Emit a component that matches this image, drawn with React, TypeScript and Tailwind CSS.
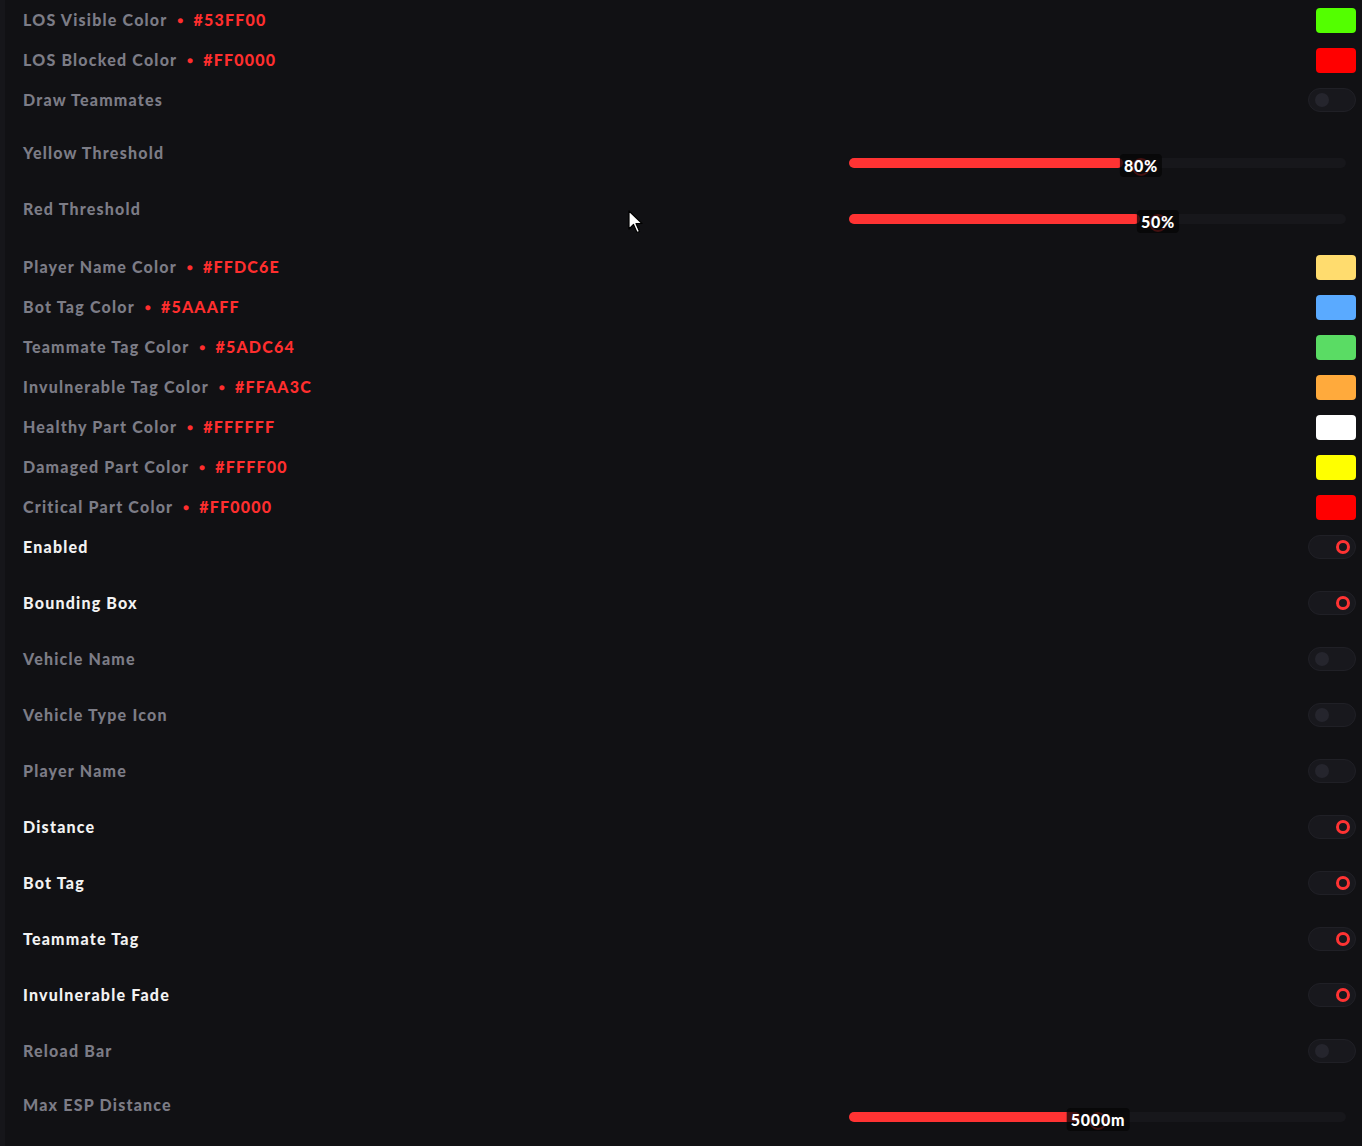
import React from 'react';

type ColorRow = { label: string; hex: string };
type ToggleRow = { label: string; on: boolean };

const topColors: ColorRow[] = [
  { label: 'LOS Visible Color', hex: '#53FF00' },
  { label: 'LOS Blocked Color', hex: '#FF0000' },
];

const tagColors: ColorRow[] = [
  { label: 'Player Name Color', hex: '#FFDC6E' },
  { label: 'Bot Tag Color', hex: '#5AAAFF' },
  { label: 'Teammate Tag Color', hex: '#5ADC64' },
  { label: 'Invulnerable Tag Color', hex: '#FFAA3C' },
  { label: 'Healthy Part Color', hex: '#FFFFFF' },
  { label: 'Damaged Part Color', hex: '#FFFF00' },
  { label: 'Critical Part Color', hex: '#FF0000' },
];

const toggles: ToggleRow[] = [
  { label: 'Enabled', on: true },
  { label: 'Bounding Box', on: true },
  { label: 'Vehicle Name', on: false },
  { label: 'Vehicle Type Icon', on: false },
  { label: 'Player Name', on: false },
  { label: 'Distance', on: true },
  { label: 'Bot Tag', on: true },
  { label: 'Teammate Tag', on: true },
  { label: 'Invulnerable Fade', on: true },
  { label: 'Reload Bar', on: false },
];

const Toggle = ({ on }: { on: boolean }) => (
  <div className="relative w-12 h-6 rounded-full bg-[#18181d] border border-[#202026] flex items-center">
    {on ? (
      <div className="absolute right-[5px] w-[14px] h-[14px] rounded-full border-[3px] border-[#ff3333]" />
    ) : (
      <div className="absolute left-[6px] w-[14px] h-[14px] rounded-full bg-[#25252d]" />
    )}
  </div>
);

const Swatch = ({ hex }: { hex: string }) => (
  <div className="w-10 h-[25px] rounded-[4px]" style={{ backgroundColor: hex }} />
);

const ColorLine = ({ row, first }: { row: ColorRow; first?: boolean }) => (
  <div className={`h-10 flex items-center justify-between pr-[6px] ${first ? 'mt-[15px]' : ''}`}>
    <div className="flex items-center gap-[10px] text-[#7c7c86]">
      <span>{row.label}</span>
      <span className="text-[#ff2e2e] text-[10px] tracking-normal">●</span>
      <span className="text-[#ff2e2e]">{row.hex}</span>
    </div>
    <Swatch hex={row.hex} />
  </div>
);

const Slider = ({ label, fill, value, trackOffset = 38 }: { label: string; fill: number; value: string; trackOffset?: number }) => {
  const thumb = fill + 18;
  return (
    <div className="h-14 flex justify-between pr-4">
      <span className="mt-[23px] h-5 leading-5 text-[#7c7c86]">{label}</span>
      <div className="relative w-[497px] h-[10px] rounded-full bg-[#17171b]" style={{ marginTop: trackOffset }}>
        <div className="h-full rounded-full bg-[#ff3333]" style={{ width: fill }} />
        <div
          className="absolute top-0 w-[18px] h-[18px] rounded-full border-2 border-[#ff3333] -translate-x-1/2"
          style={{ left: thumb }}
        />
        <div
          className="absolute top-[-4px] -translate-x-1/2 px-[4px] h-[23px] leading-[23px] rounded-[4px] bg-[#050506]/75 text-white tracking-[0.8px]"
          style={{ left: thumb }}
        >
          {value}
        </div>
      </div>
    </div>
  );
};

const Cursor = () => (
  <svg className="absolute left-[623px] top-[210px]" width="16" height="26" viewBox="0 0 16 26">
    <path d="M1 1 L1 19 L5.5 14.5 L9 22.5 L11.5 21.5 L8 13.5 L14 13.5 Z" fill="#ffffff" stroke="#000000" strokeWidth="1.2" strokeLinejoin="round" />
  </svg>
);

export default function App() {
  return (
    <div
      className="relative w-[1362px] h-[1146px] overflow-hidden bg-[#111114] border-l-[5px] border-[#16161a] pl-[18px] text-[16px] font-black tracking-[1.2px]"
      style={{ fontFamily: 'Lato, "Open Sans", sans-serif' }}
    >
      {topColors.map(r => (
        <ColorLine key={r.label} row={r} />
      ))}
      <div className="h-10 flex items-center justify-between pr-[6px]">
        <span className="text-[#7c7c86]">Draw Teammates</span>
        <Toggle on={false} />
      </div>

      <Slider label="Yellow Threshold" fill={274} value="80%" />
      <Slider label="Red Threshold" fill={291} value="50%" />

      {tagColors.map((r, i) => (
        <ColorLine key={r.label} row={r} first={i === 0} />
      ))}

      {toggles.map((t, i) => (
        <div key={t.label} className={`h-10 flex items-center justify-between pr-[6px] ${i > 0 ? 'mt-4' : ''}`}>
          <span className={t.on ? 'text-[#f2f2f2]' : 'text-[#7c7c86]'}>{t.label}</span>
          <Toggle on={t.on} />
        </div>
      ))}

      <div className="mt-px">
        <Slider label="Max ESP Distance" fill={231} value="5000m" trackOffset={40} />
      </div>

      <Cursor />
    </div>
  );
}
